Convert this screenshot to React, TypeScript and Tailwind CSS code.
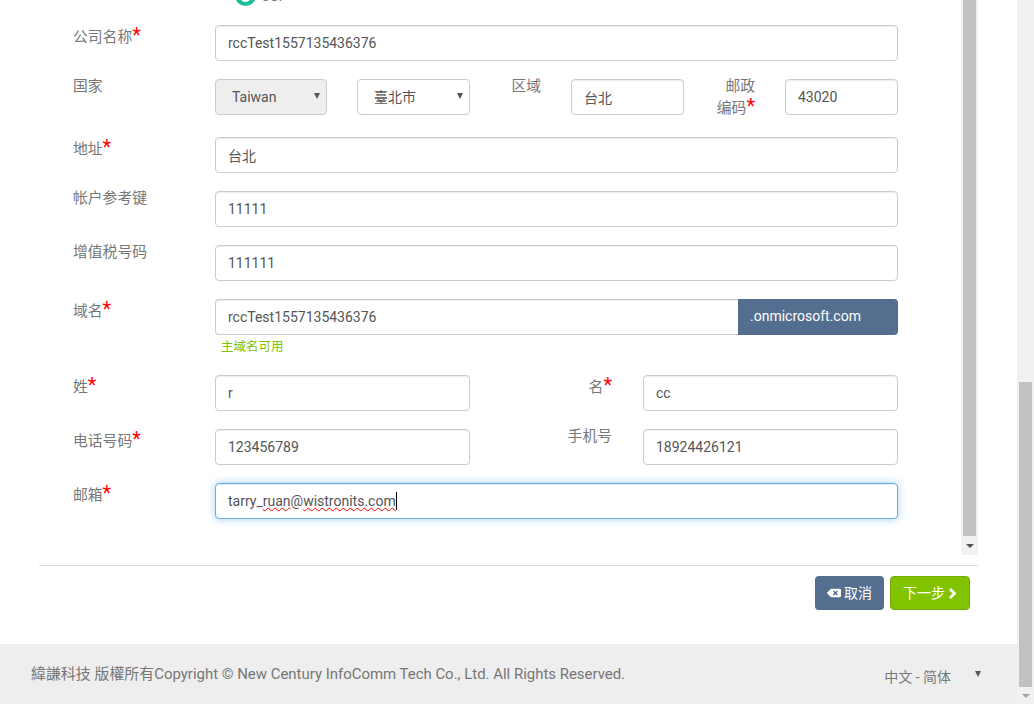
import { FaBackspace } from "react-icons/fa";

const inputCls =
  "h-9 w-full rounded border border-[#ccc] bg-white px-3 text-sm text-[#555] shadow-[inset_0_1px_1px_rgba(0,0,0,0.075)] outline-none";

const Star = () => <span className="text-xl leading-[20px] text-[#f00]">*</span>;

const Label = ({ text, req }: { text: string; req?: boolean }) => (
  <div className={`w-[142px] shrink-0 text-[14.8px] leading-5 text-[#777] ${req ? "pt-0" : "-mt-[3px]"}`}>
    {text}
    {req && <Star />}
  </div>
);

const Field = ({ value, className = "" }: { value: string; className?: string }) => (
  <input className={`${inputCls} ${className}`} defaultValue={value} readOnly />
);

const Row = ({ label, req, value }: { label: string; req?: boolean; value: string }) => (
  <div className="mb-[18px] flex">
    <Label text={label} req={req} />
    <Field value={value} />
  </div>
);

const Arrow = ({ className = "" }: { className?: string }) => (
  <span
    className={`h-0 w-0 border-x-[3px] border-t-[6px] border-x-transparent border-t-[#555] ${className}`}
  />
);

const Picker = ({ value, disabled }: { value: string; disabled?: boolean }) => (
  <div className={`relative shrink-0 ${disabled ? "w-[112px]" : "w-[113px]"}`}>
    <select
      className={`h-9 w-full appearance-none rounded border border-[#ccc] pl-4 text-sm text-[#555] outline-none ${
        disabled ? "bg-[#eee]" : "bg-white"
      }`}
      defaultValue={value}
    >
      <option>{value}</option>
    </select>
    <Arrow className="pointer-events-none absolute right-[7px] top-[14px]" />
  </div>
);

const Scrollbar = ({ spacer, thumb, dark }: { spacer: number; thumb: number; dark?: boolean }) => (
  <div className="flex w-[17px] shrink-0 flex-col items-center bg-[#f1f1f1]">
    <div style={{ height: spacer }} />
    <div className="w-[13px] bg-[#c1c1c1]" style={{ height: thumb }} />
    <div className="flex flex-1 items-center justify-center">
      <span
        className={`h-0 w-0 border-x-[4px] border-t-[4px] border-x-transparent ${
          dark ? "border-t-[#505050]" : "border-t-[#a3a3a3]"
        }`}
      />
    </div>
  </div>
);

export default function App() {
  return (
    <div className="flex h-[704px] w-[1034px] overflow-hidden bg-white font-['Roboto','Noto_Sans_CJK_SC',sans-serif]">
      <div className="flex w-[1017px] flex-col">
        <main className="h-[644px] px-[39px]">
          <div className="flex h-[555px]">
            <div className="flex-1 overflow-hidden pl-[34px] pr-[63px]">
              {/* radio row, scrolled mostly out of view */}
              <div className="h-[25px] overflow-hidden pl-[162px]">
                <div className="-mt-[15px] flex items-end gap-[5px]">
                  <span className="h-[21px] w-[21px] rounded-full border-[4px] border-[#1abc9c]" />
                  <span className="text-sm leading-[20px] text-[#777]">CSP</span>
                </div>
              </div>

              <Row label="公司名称" req value="rccTest1557135436376" />

              <div className="mb-[22px] flex h-9">
                <Label text="国家" />
                <Picker value="Taiwan" disabled />
                <div className="ml-[30px]">
                  <Picker value="臺北市" />
                </div>
                <div className="-mt-[3px] w-[101px] shrink-0 pr-[30px] text-right text-[14.8px] leading-5 text-[#777]">
                  区域
                </div>
                <div className="w-[113px] shrink-0">
                  <Field value="台北" />
                </div>
                <div className="-mt-[3px] w-[101px] shrink-0 pr-[30px] text-right text-[14.8px] leading-5 text-[#777]">
                  邮政
                  <br />
                  编码
                  <Star />
                </div>
                <div className="w-[113px] shrink-0">
                  <Field value="43020" />
                </div>
              </div>

              <Row label="地址" req value="台北" />
              <Row label="帐户参考键" value="11111" />
              <Row label="增值税号码" value="111111" />

              <div className="mb-[22px] flex">
                <Label text="域名" req />
                <div className="flex-1">
                  <div className="flex">
                    <Field value="rccTest1557135436376" className="rounded-r-none border-r-0" />
                    <div className="flex h-9 w-40 shrink-0 items-center rounded-r bg-[#546e8f] pb-[2px] pl-3 text-sm text-white">
                      .onmicrosoft.com
                    </div>
                  </div>
                  <p className="mt-[5px] h-[13px] pl-[6px] text-[12.5px] leading-[14px] text-[#82c300]">主域名可用</p>
                </div>
              </div>

              <div className="mb-[18px] flex">
                <Label text="姓" req />
                <div className="w-[255px] shrink-0">
                  <Field value="r" />
                </div>
                <div className="w-[173px] shrink-0 pr-[31px] text-right text-[14.8px] leading-5 text-[#777]">
                  名
                  <Star />
                </div>
                <Field value="cc" />
              </div>

              <div className="mb-[18px] flex">
                <Label text="电话号码" req />
                <div className="w-[255px] shrink-0">
                  <Field value="123456789" />
                </div>
                <div className="-mt-[3px] w-[173px] shrink-0 pr-[31px] text-right text-[14.8px] leading-5 text-[#777]">
                  手机号
                </div>
                <Field value="18924426121" />
              </div>

              <div className="flex">
                <Label text="邮箱" req />
                <div className="flex h-9 w-full items-center rounded border border-[#66afe9] bg-white px-3 text-sm text-[#555] shadow-[inset_0_1px_1px_rgba(0,0,0,0.075),0_0_8px_rgba(102,175,233,0.6)]">
                  <span>
                    tarry_
                    <span className="underline decoration-[#f00] decoration-wavy decoration-1">ruan</span>@
                    <span className="underline decoration-[#f00] decoration-wavy decoration-1">wistronits.com</span>
                  </span>
                  <span className="h-[18px] w-px bg-black" />
                </div>
              </div>
            </div>
            <Scrollbar spacer={0} thumb={536} dark />
          </div>

          <div className="mt-[10px] border-t border-[#ddd] pt-[10px]">
            <div className="flex justify-end gap-[6px] pr-2">
              <button className="flex h-[34px] w-[69px] items-center justify-center gap-[3px] rounded bg-[#546e8f] text-sm text-white">
                <FaBackspace className="text-sm" />
                取消
              </button>
              <button className="flex h-[34px] w-20 items-center justify-center gap-[3px] rounded border border-[#76a90a] bg-[#82c300] text-sm text-white">
                下一步
                <svg width="9" height="11" viewBox="0 0 9 11" fill="none" stroke="white" strokeWidth="2.8">
                  <polyline points="2,1 6.5,5.5 2,10" />
                </svg>
              </button>
            </div>
          </div>
        </main>

        <footer className="flex h-[60px] items-center justify-between bg-[#eee] pl-[31px] pr-9">
          <span className="text-[14.95px] text-[#777]">
            緯謙科技 版權所有Copyright © New Century InfoComm Tech Co., Ltd. All Rights Reserved.
          </span>
          <div className="flex items-center gap-[24px] pt-[6px] text-sm text-[#777]">
            中文 - 简体
            <Arrow className="-mt-[6px]" />
          </div>
        </footer>
      </div>
      <Scrollbar spacer={382} thumb={305} />
    </div>
  );
}
